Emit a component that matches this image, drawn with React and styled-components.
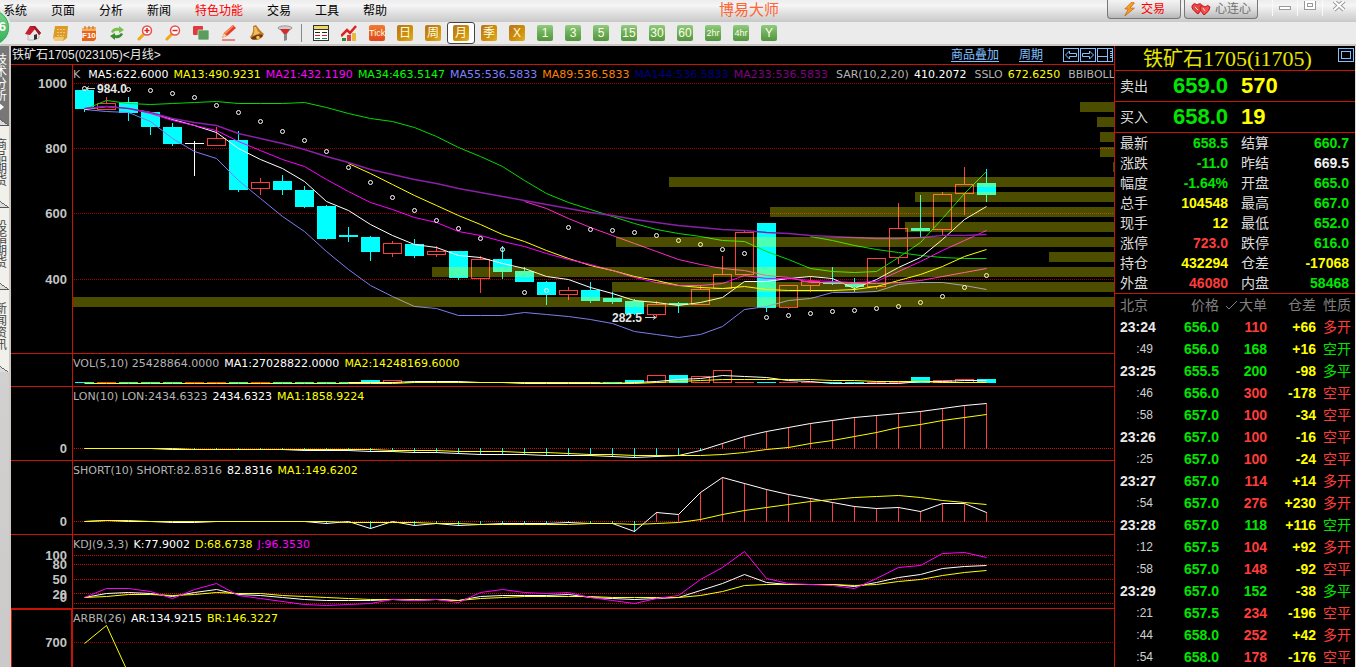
import React from "react"
import styled, { createGlobalStyle, css } from "styled-components"

const cjk = `"Liberation Sans", "Noto Sans CJK SC", sans-serif`
const RED = "#c81405"
const UP = "#ff3c3c"
const DOWN = "#00e600"
const CYAN = "#00ffff"
const YELLOW = "#ffff00"
const MAGENTA = "#ff00ff"
const WHITE = "#ffffff"
const GREY = "#b4b4b4"

const GlobalStyle = createGlobalStyle`
  * {
    box-sizing: border-box;
  }

  body {
    margin: 0;
    background: #000;
    font-family: ${cjk};
    font-size: 12px;
  }

  button {
    border: 0;
    padding: 0;
    background: none;
    font-family: inherit;
    color: inherit;
    cursor: pointer;
  }

  table {
    border-collapse: collapse;
    table-layout: fixed;
    width: 100%;
  }

  th, td {
    padding: 0;
    font-weight: normal;
    white-space: nowrap;
  }
`

const Page = styled.div`
  display: flex;
  flex-direction: column;
  height: 100vh;
  overflow: hidden;
  position: relative;
`

/* ---------- top bars ---------- */

const MenuBar = styled.header`
  display: flex;
  flex: none;
  height: 22px;
  background: linear-gradient(#ededed 0, #f5f5f5 25%, #e0e0e0 60%, #c9c9c9 100%);
`

const Menu = styled.nav`
  display: flex;
  gap: 24px;
  padding-left: 3px;
`

const MenuItem = styled.button`
  font-size: 12px;
  line-height: 20px;
  white-space: nowrap;
  color: ${(props) => (props.$hot ? "#ff0000" : "#000")};
`

const Brand = styled.div`
  flex: 1;
  padding-left: 4px;
  text-align: center;
  font-size: 15px;
  line-height: 20px;
  color: #ff6432;
`

const PillGroup = styled.div`
  display: flex;
  gap: 3px;
  margin-right: 14px;
`

const Pill = styled.button`
  display: flex;
  align-items: center;
  justify-content: center;
  gap: 4px;
  width: 74px;
  height: 19px;
  border: 1px solid #777;
  border-top: 0;
  border-radius: 0 0 4px 4px;
  background: linear-gradient(#f4f4f4, #dcdcdc 55%, #b8b8b8);
  font-size: 12px;
  line-height: 16px;
  color: ${(props) => (props.$hot ? "#ff0000" : "#707070")};
`

const WindowButton = styled.button`
  width: ${(props) => (props.$wide ? 34 : 25)}px;
  height: 16px;
  border-left: 1px solid #fafafa;

  svg {
    display: block;
    margin: 0 auto;
  }
`

const ToolBar = styled.div`
  display: flex;
  flex: none;
  height: 24px;
  padding-left: 19px;
  border-bottom: 2px solid #cec6c1;
  background: #ebebeb;
`

const ToolButton = styled.button`
  display: flex;
  align-items: center;
  justify-content: center;
  flex: none;
  width: 28px;
  height: 22px;
  ${(props) =>
    props.$active &&
    css`
      border: 1px solid #444;
      border-radius: 3px;
      background: #fff;
    `}
`

const Divider = styled.span`
  flex: none;
  width: 1px;
  height: 18px;
  margin: 2px 5px 0 2px;
  background: #888;
`

const tones = {
  gold: "linear-gradient(135deg, #b8741c, #d09008 60%, #dcae30)",
  green: "linear-gradient(#92cb80, #6cae5a 50%, #55953f)",
  tick: "linear-gradient(#f07c30, #e0481c)",
}

const Tile = styled.span`
  width: 16px;
  height: 16px;
  border-radius: 2px;
  background: ${(props) => tones[props.$tone]};
  color: #fffde0;
  font-size: ${(props) => (props.$small ? 9 : 12)}px;
  line-height: 16px;
  text-align: center;
  white-space: nowrap;
`

const Bubble = styled.div`
  position: absolute;
  left: -28px;
  top: 8px;
  width: 39px;
  height: 39px;
  border: 2px solid #d8efe0;
  border-radius: 50%;
  outline: 1px solid #5d9c74;
  outline-offset: -3px;
  background: linear-gradient(#7ad68c, #2fae55);
  color: #fff;
  font-size: 13px;
  font-weight: bold;
  line-height: 34px;
  text-align: right;
  padding-right: 3px;
`

/* ---------- body ---------- */

const Body = styled.div`
  display: flex;
  flex: 1;
  min-height: 0;
`

const SideBar = styled.nav`
  display: flex;
  flex: none;
  flex-direction: column;
  align-items: flex-end;
  width: 11px;
  overflow: hidden;
  border-right: 2px solid #cec6c1;
  background: linear-gradient(#d8d8d8, #cacaca);
`

const SideTab = styled.button`
  display: flex;
  flex-direction: column;
  align-items: center;
  flex: none;
  width: 16px;
  height: ${(props) => (props.$active ? 80 : 82)}px;
  padding-top: ${(props) => (props.$active ? 8 : 13)}px;
  background:
    linear-gradient(34deg, #dcdcdc 8px, #666 8px, #666 9px, transparent 9px),
    ${(props) => (props.$active ? "#777" : "#f1f0ea")};
  border-bottom: ${(props) => (props.$end ? 0 : 1)}px solid #555;
  color: ${(props) => (props.$active ? "#fff" : "#444")};
  font-size: 12px;
  line-height: 12px;

  span {
    display: block;
    width: 12px;
  }
`

const ChartArea = styled.main`
  display: flex;
  flex: 1;
  flex-direction: column;
  min-width: 0;
  background: #000;
`

const ChartHeader = styled.div`
  display: flex;
  flex: none;
  height: 19px;
  border-bottom: 1px solid ${RED};
  color: #e8e8e8;
  font-size: 12px;
  line-height: 18px;
`

const ChartTitle = styled.h1`
  flex: 1;
  margin: 0;
  padding-left: 1px;
  font-size: 12px;
  font-weight: normal;
`

const HeaderLink = styled.a`
  margin-right: 20px;
  color: #80c0ff;
  text-decoration: underline;
  text-underline-offset: 2px;
`

const IconButton = styled.button`
  width: 17px;
  height: 15px;
  margin-top: 1px;

  svg {
    display: block;
  }
`

const Pane = styled.section`
  display: flex;
  flex: ${(props) => (props.$last ? "1" : "none")};
  min-height: 0;
  overflow: hidden;
  border-bottom: ${(props) => (props.$last ? "0" : `1px solid ${RED}`)};
`

const Axis = styled.div`
  flex: none;
  width: 62px;
  border: solid ${RED};
  border-width: ${(props) => (props.$focus ? "1px 2px 0 1px" : "0 1px 0 0")};

  svg {
    display: block;
  }

  text {
    fill: #c4c4c4;
    font: bold 13px "Liberation Sans", sans-serif;
    text-anchor: end;
  }
`

const Plot = styled.div`
  flex: 1;
  min-width: 0;
`

const Legend = styled.div`
  display: flex;
  gap: 5px;
  height: 16px;
  overflow: visible;
  font-family: "DejaVu Sans", sans-serif;
  font-size: 11px;
  line-height: 20px;
  white-space: nowrap;
`

const LegendItem = styled.span`
  color: ${(props) => props.$color};
  padding-left: ${(props) => (props.$lead ? 3 : 0)}px;
`

const Canvas = styled.svg`
  display: block;
  width: 100%;

  text {
    fill: #e6e6e6;
    font: bold 12px "Liberation Sans", sans-serif;
  }
`

/* ---------- quote panel ---------- */

const QuotePanel = styled.aside`
  flex: none;
  width: 242px;
  overflow: hidden;
  border-left: 1px solid ${RED};
  border-right: 1px solid #ddd;
  background: #000;
  color: #dcdcdc;
`

const QuoteHeader = styled.div`
  display: flex;
  height: 25px;
  padding-left: 28px;
  border-bottom: 1px solid ${RED};
`

const QuoteTitle = styled.h2`
  flex: 1;
  margin: 0;
  color: #e6e600;
  font-family: "Noto Sans CJK SC", sans-serif;
  font-size: 20px;
  font-weight: normal;
  line-height: 24px;
  white-space: nowrap;

  span {
    font-family: "Liberation Serif", serif;
    font-size: 22px;
  }
`

const BigRow = styled.div`
  display: grid;
  grid-template-columns: 28px 80px 1fr;
  column-gap: 0;
  height: 31px;
  padding-left: 5px;
  border-bottom: 1px solid ${RED};
  font-size: 14px;
  line-height: 30px;
`

const BigNumber = styled.span`
  color: ${(props) => props.$color};
  font-size: 22px;
  font-weight: bold;
  text-align: ${(props) => (props.$right ? "right" : "left")};
  padding-left: ${(props) => (props.$right ? 0 : 13)}px;
`

const QuoteTable = styled.table`
  border-bottom: 1px solid ${RED};
  font-size: 14px;
  line-height: 20px;

  tr {
    height: 20px;
  }

  th {
    padding-left: 5px;
    text-align: left;
  }

  td + th {
    padding-left: 13px;
  }

  td:last-child {
    padding-right: 6px;
  }
`

const Value = styled.td`
  color: ${(props) => props.$color};
  font-weight: bold;
  text-align: right;
`

const TickTable = styled.table`
  font-size: 14px;
  line-height: 22px;

  tr {
    height: 22px;
  }

  thead {
    color: #808080;
  }

  th {
    text-align: right;
  }

  th:first-child {
    padding-left: 5px;
    text-align: left;
  }
`

const Minute = styled.td`
  padding-left: 5px;
  color: #e8e8e8;
  font-weight: bold;
`

const Second = styled.td`
  padding-right: 4px;
  color: #d0d0d0;
  font-size: 12px;
  text-align: right;
`

const Nature = styled.td`
  color: ${(props) => props.$color};
  text-align: right;
  padding-right: 4px;
`

const LastHead = styled.th`
  padding-right: 4px;
`

/* ---------- data ---------- */

const menus = ["系统", "页面", "分析", "新闻", "特色功能", "交易", "工具", "帮助"]

const sideTabs = ["技术分析", "商品期货", "股指期货", "新闻资讯"]

const periods = [
  ["Tick", "tick"],
  ["日", "gold"],
  ["周", "gold"],
  ["月", "gold"],
  ["季", "gold"],
  ["X", "gold"],
  ["1", "green"],
  ["3", "green"],
  ["5", "green"],
  ["15", "green"],
  ["30", "green"],
  ["60", "green"],
  ["2hr", "green"],
  ["4hr", "green"],
  ["Y", "green"],
]

// type, body top, body bottom, high, low
const candles = [
  ["d", 90, 109, 89, 112],
  ["u", 103, 110, 97, 110],
  ["d", 102, 113, 97, 121],
  ["d", 112, 127, 112, 135],
  ["d", 127, 144, 123, 146],
  ["x", 143, 144, 141, 176],
  ["u", 138, 146, 127, 146],
  ["d", 140, 190, 131, 192],
  ["u", 182, 189, 178, 195],
  ["d", 181, 190, 175, 195],
  ["d", 190, 207, 186, 208],
  ["d", 206, 239, 205, 240],
  ["d", 235, 237, 227, 242],
  ["d", 237, 252, 236, 261],
  ["u", 243, 254, 241, 257],
  ["d", 244, 256, 239, 258],
  ["u", 251, 255, 246, 257],
  ["d", 251, 278, 251, 280],
  ["u", 259, 279, 256, 293],
  ["d", 259, 272, 246, 279],
  ["d", 271, 282, 267, 282],
  ["d", 282, 295, 281, 305],
  ["u", 290, 295, 287, 300],
  ["d", 290, 301, 282, 303],
  ["d", 298, 302, 292, 304],
  ["d", 301, 314, 299, 315],
  ["u", 304, 315, 301, 318],
  ["d", 303, 305, 302, 313],
  ["u", 289, 305, 285, 305],
  ["u", 274, 289, 256, 289],
  ["u", 232, 275, 230, 275],
  ["d", 223, 308, 223, 312],
  ["u", 285, 308, 285, 309],
  ["u", 281, 286, 276, 292],
  ["d", 282, 284, 267, 285],
  ["d", 284, 287, 278, 292],
  ["u", 258, 287, 258, 289],
  ["u", 228, 258, 203, 264],
  ["d", 228, 231, 195, 237],
  ["u", 194, 230, 192, 236],
  ["u", 184, 194, 167, 215],
  ["d", 183, 195, 169, 202],
]

const sar = [
  88, null, 89, 90, 93, 97, 105, 112, 121, 131, 140, 151, 167, 182, 197, 210,
  220, 228, 238, 249, 292, 290, 227, 229, 230, 232, 235, 240, 244, 249, 253,
  317, 315, 313, 311, 310, 308, 306, 302, 296, 287, 275,
]

const mainLines = [
  {
    color: "#00dc00",
    ys: [
      109, 100, 103, 104, 103, 102, 101, 103, 103, 103, 102, 107, 113, 118, 121,
      127, 136, 147, 156, 166, 180, 193, 202, 209, 216, 223, 229, 233, 236, 240,
      241, 251, 259, 268, 271, 272, 271, 257, 242, 218, 193, 171,
    ],
  },
  {
    color: "#00dc00",
    from: 33,
    ys: [236, 240, 245, 249, 252, 255, 257, 258, 258],
  },
  {
    color: "#7d7df0",
    ys: [
      109, 111, 112, 121, 138, 151, 158, 180, 198, 216, 231, 251, 269, 285, 296,
      306, 308, 315, 315, 315, 312, 314, 316, 319, 323, 331, 334, 337, 334, 326,
      309, 306, 300, 298, 292, 292, 291, 284, 282, 282, 285, 289,
    ],
  },
  {
    color: "#ffffff",
    ys: [
      109, 106, 108, 112, 119, 125, 132, 148, 159, 168, 181, 201, 210, 224, 235,
      244, 247, 255, 257, 263, 268, 276, 279, 287, 293, 300, 302, 305, 302, 297,
      281, 281, 278, 276, 278, 288, 279, 267, 257, 239, 219, 206,
    ],
  },
  {
    color: "#ffff00",
    from: 12,
    ys: [
      163, 173, 184, 195, 205, 215, 224, 234, 241, 250, 258, 265, 270, 276, 280,
      285, 287, 288, 286, 289, 290, 290, 290, 289, 286, 280, 274, 266, 256, 249,
    ],
  },
  {
    color: "#ff00ff",
    ys: [
      108, 106, 108, 113, 120, 125, 130, 141, 150, 159, 166, 179, 191, 202, 209,
      217, 222, 231, 235, 241, 246, 253, 259, 264, 270, 277, 282, 285, 285, 283,
      275, 278, 278, 280, 281, 282, 281, 271, 261, 250, 240, 230,
    ],
  },
  {
    color: "#ff28c8",
    from: 20,
    ys: [
      201, 208, 218, 227, 235, 243, 251, 259, 264, 268, 270, 275, 277, 282, 282,
      283, 283, 282, 280, 276, 272, 268,
    ],
  },
  {
    color: "#8a1fa8",
    wide: true,
    ys: [
      108, 106, 108, 112, 118, 122, 125, 133, 138, 143, 149, 156, 162, 169, 174,
      179, 183, 188, 192, 196, 200, 204, 208, 212, 215, 219, 222, 225, 227, 229,
      230, 232, 233, 235, 236, 237, 238, 238, 237, 235, 235, 234,
    ],
  },
]

// price distribution, widths measured from the right edge
const bands = [34, 17, 14, 14, 1, 445, 199, 344, 209, 498, 65, 682, 502, 1041]

const volumes = [
  382, 382, 382, 382, 382, 382, 382, 382, 382, 382, 382, 382, 382, 380, 380,
  382, 382, 382, 382, 382, 382, 382, 382, 382, 382, 380, 375, 375, 376, 370,
  382, 382, 382, 382, 382, 382, 382, 382, 377, 380, 379, 379,
]

const volLines = [
  {
    color: WHITE,
    from: 12,
    ys: [
      382, 382, 382, 381, 381, 381, 382, 382, 383, 383, 383, 383, 383, 382, 381,
      379, 378, 375, 376, 377, 380, 381, 383, 383, 383, 383, 381, 381, 380, 380,
    ],
  },
  {
    color: YELLOW,
    ys: [
      383, 383, 383, 383, 383, 383, 383, 383, 383, 383, 383, 383, 383, 383, 383,
      382, 382, 382, 382, 382, 382, 382, 382, 382, 383, 383, 382, 381, 380, 379,
      379, 379, 379, 379, 380, 380, 381, 381, 381, 382, 382, 382,
    ],
  },
]

const lon = [
  448, 448, 448, 448, 449, 449, 449, 449, 449, 449, 450, 450, 450, 451, 451,
  452, 452, 453, 454, 454, 454, 455, 455, 455, 456, 457, 456, 455, 450, 443,
  436, 431, 427, 423, 420, 417, 415, 413, 411, 408, 405, 403,
]

const lonMa = [
  448, 448, 448, 448, 448, 449, 449, 449, 449, 449, 449, 449, 449, 449, 450,
  450, 450, 451, 451, 451, 452, 452, 453, 454, 454, 455, 455, 455, 455, 454,
  452, 449, 447, 443, 440, 436, 432, 427, 424, 420, 417, 414,
]

const short = [
  521, 520, 521, 521, 522, 522, 521, 521, 521, 521, 521, 523, 521, 528, 521,
  525, 523, 525, 524, 523, 523, 523, 522, 523, 523, 531, 512, 514, 492, 477,
  483, 489, 494, 498, 502, 506, 508, 507, 511, 503, 503, 512,
]

const shortMa = [
  521, 520, 520, 521, 521, 521, 521, 521, 521, 521, 521, 521, 522, 522, 522,
  522, 523, 523, 524, 524, 524, 524, 524, 523, 523, 524, 523, 522, 519, 514,
  510, 507, 504, 501, 499, 497, 496, 495, 497, 500, 502, 504,
]

const kdjLines = [
  {
    color: WHITE,
    ys: [
      597, 593, 592, 593, 596, 592, 589, 594, 595, 597, 599, 600, 600, 600, 599,
      600, 599, 600, 596, 595, 595, 595, 594, 597, 598, 599, 598, 597, 590, 583,
      574, 582, 584, 584, 584, 586, 582, 577, 574, 568, 566, 565,
    ],
  },
  {
    color: YELLOW,
    ys: [
      597, 596, 594, 594, 595, 594, 592, 593, 593, 595, 596, 597, 598, 599, 599,
      599, 599, 600, 598, 597, 596, 596, 596, 596, 597, 597, 597, 597, 595, 591,
      585, 584, 584, 584, 584, 585, 584, 581, 579, 575, 572, 570,
    ],
  },
  {
    color: MAGENTA,
    ys: [
      597, 588, 588, 591, 598, 589, 583, 595, 598, 601, 604, 605, 604, 603, 599,
      600, 599, 602, 592, 589, 592, 593, 592, 597, 600, 603, 598, 595, 579, 567,
      551, 578, 583, 584, 585, 588, 578, 567, 565, 553, 552, 557,
    ],
  },
]

const quotes = [
  ["最新", "658.5", DOWN, "结算", "660.7", DOWN],
  ["涨跌", "-11.0", DOWN, "昨结", "669.5", "#f0f0f0"],
  ["幅度", "-1.64%", DOWN, "开盘", "665.0", DOWN],
  ["总手", "104548", YELLOW, "最高", "667.0", DOWN],
  ["现手", "12", YELLOW, "最低", "652.0", DOWN],
  ["涨停", "723.0", UP, "跌停", "616.0", DOWN],
  ["持仓", "432294", YELLOW, "仓差", "-17068", YELLOW],
  ["外盘", "46080", UP, "内盘", "58468", DOWN],
]

const ticks = [
  ["23:24", "656.0", "110", "+66", "多开", UP],
  [":49", "656.0", "168", "+16", "空开", DOWN],
  ["23:25", "655.5", "200", "-98", "多平", DOWN],
  [":46", "656.0", "300", "-178", "空平", UP],
  [":58", "657.0", "100", "-34", "空平", UP],
  ["23:26", "657.0", "100", "-16", "空平", UP],
  [":25", "657.0", "100", "-24", "空平", UP],
  ["23:27", "657.0", "114", "+14", "多开", UP],
  [":54", "657.0", "276", "+230", "多开", UP],
  ["23:28", "657.0", "118", "+116", "空开", DOWN],
  [":12", "657.5", "104", "+92", "多开", UP],
  [":58", "657.0", "148", "-92", "空平", UP],
  ["23:29", "657.0", "152", "-38", "多平", DOWN],
  [":21", "657.5", "234", "-196", "空平", UP],
  [":44", "658.0", "252", "+42", "多开", UP],
  [":54", "658.0", "178", "-176", "空平", UP],
]

/* ---------- chart pieces ---------- */

const STEP = 22
const xAt = (i) => 11 + i * STEP

const Line = ({ color, ys, from = 0, wide }) => (
  <polyline
    fill="none"
    stroke={color}
    strokeWidth={wide ? 1.5 : 1}
    points={ys.map((y, i) => `${xAt(i + from) + 0.5},${y + 0.5}`).join(" ")}
  />
)

const GridLine = ({ y, color = "#a00000" }) => (
  <line
    x1="1"
    x2="100%"
    y1={y + 0.5}
    y2={y + 0.5}
    stroke={color}
    strokeDasharray="1 1"
    shapeRendering="crispEdges"
  />
)

const Bar = ({ i, up, top, bottom }) =>
  up && bottom - top > 1 ? (
    <rect
      x={xAt(i) - 8.5}
      y={top + 0.5}
      width="18"
      height={bottom - top - 1}
      fill="#000"
      stroke={UP}
    />
  ) : (
    <rect
      x={xAt(i) - 9}
      y={top}
      width="19"
      height={bottom - top}
      fill={up ? UP : CYAN}
    />
  )

const Candle = ({ i, candle }) => {
  const [type, top, bottom, high, low] = candle
  const color = { u: UP, d: CYAN, x: WHITE }[type]
  return (
    <g>
      <rect x={xAt(i)} y={high} width="1" height={low - high} fill={color} />
      {type === "x" ? (
        <rect x={xAt(i) - 9} y={top} width="19" height="1" fill={color} />
      ) : (
        <Bar i={i} up={type === "u"} top={top} bottom={bottom} />
      )}
    </g>
  )
}

const Stems = ({ ys, zero, from = 0 }) =>
  ys.map((y, i) =>
    i < from || y === zero ? null : (
      <rect
        key={i}
        x={xAt(i)}
        y={Math.min(y, zero)}
        width="1"
        height={Math.abs(y - zero) + 1}
        fill={y < zero ? UP : CYAN}
      />
    )
  )

// All series share one vertical scale; `top` is where a pane starts on it.
const ChartPane = ({ top, height, labels = [], legend, last, children }) => (
  <Pane $last={last}>
    <Axis $focus={last}>
      <svg width="59" height={height} aria-hidden="true">
        {labels.map(([text, y]) => (
          <text key={text} x={last ? 55 : 56} y={y - top + (last ? 4 : 5)}>
            {text}
          </text>
        ))}
      </svg>
    </Axis>
    <Plot>
      <Legend>
        {legend.map(([text, color, lead]) => (
          <LegendItem key={text} $color={color} $lead={lead}>
            {text}
          </LegendItem>
        ))}
      </Legend>
      <Canvas height={height - 16}>
        <g transform={`translate(0 ${-top - 16})`}>{children}</g>
      </Canvas>
    </Plot>
  </Pane>
)

/* ---------- toolbar drawings ---------- */

const Glyph = ({ children, size = 16 }) => (
  <svg width={size} height={size} viewBox="0 0 16 16" aria-hidden="true">
    {children}
  </svg>
)

const tools = [
  [
    "首页",
    <Glyph>
      <path d="M3 8v7h5l6-2V7L9 4z" fill="#e8e8e8" stroke="#999" strokeWidth=".6" />
      <path d="M0 9l5-8h5l6 7-2 2-4-6-5 6z" fill="#c42030" />
      <path d="M5 1h5l6 7-2 2-5-7z" fill="#a01828" />
      <path d="M9 15v-5l3-1v5z" fill="#303030" />
    </Glyph>,
  ],
  [
    "记事",
    <Glyph>
      <path d="M2 1h13l-1 12-4 3H2L0 13z" fill="#dc9a28" />
      <path d="M0 13l2-1h9l-1 4H2z" fill="#f0c878" />
      <path d="M4 4.500h8M4 7.500h8M4 10.500h7" stroke="#f0c878" strokeDasharray="2 1" />
    </Glyph>,
  ],
  [
    "资料",
    <Glyph>
      <path d="M1 3l14-1v12l-2 2H1z" fill="#e8641c" />
      <path d="M1 3l14-1v4H1z" fill="#f4b060" />
      <path d="M4 1v3M8 1v3M12 1v3" stroke="#b06820" />
      <text x="1" y="13" fontSize="8" fontWeight="bold" fill="#fff">
        F10
      </text>
    </Glyph>,
  ],
  [
    "刷新",
    <Glyph>
      <path d="M2 7q2-5 8-4V1l5 4-5 3V6Q6 5 4 8z" fill="#7cc050" />
      <path d="M14 9q-2 5-8 4v2l-5-4 5-3v2q4 1 6-2z" fill="#3c8c30" />
    </Glyph>,
  ],
  [
    "放大",
    <Glyph>
      <path d="M2 14l5-5" stroke="#f0a818" strokeWidth="3" strokeLinecap="round" />
      <circle cx="10" cy="5.500" r="4.500" fill="#fff" stroke="#e85048" strokeWidth="1.500" />
      <path d="M7.500 5.500h5M10 3v5" stroke="#e02020" strokeWidth="1.500" />
    </Glyph>,
  ],
  [
    "缩小",
    <Glyph>
      <path d="M2 14l5-5" stroke="#f0a818" strokeWidth="3" strokeLinecap="round" />
      <circle cx="10" cy="5.500" r="4.500" fill="#fff" stroke="#e85048" strokeWidth="1.500" />
      <path d="M7.500 5.500h5" stroke="#e02020" strokeWidth="1.500" />
    </Glyph>,
  ],
  [
    "叠加",
    <Glyph>
      <rect x="0" y="1" width="10" height="9" rx="1" fill="#dc3c3c" />
      <rect x="5" y="5" width="11" height="10" rx="1" fill="#5c9c5c" stroke="#e0f0e0" strokeWidth=".7" />
    </Glyph>,
  ],
  [
    "画线",
    <Glyph>
      <path d="M1 13l2-5 9-8 3 3-9 8z" fill="#e83c28" />
      <path d="M1 13l2-5 3 3z" fill="#f4d088" />
      <path d="M3 8l9-8 1 1-8 8z" fill="#f88858" />
      <path d="M1 15h13" stroke="#e86060" strokeWidth="1.500" />
    </Glyph>,
  ],
  [
    "预警",
    <Glyph>
      <path d="M1 12Q5 8 4 1l3-1q4 6 8 9-3 6-8 6-5 0-6-3z" fill="#c47c24" />
      <path d="M5 2l2 0q1 4 4 6l-7 3q2-4 1-9z" fill="#f0bc60" />
      <ellipse cx="8" cy="12" rx="6" ry="2" fill="#70380c" transform="rotate(-14 8 12)" />
      <circle cx="9" cy="12.500" r="1.800" fill="#f0c060" />
    </Glyph>,
  ],
  [
    "筛选",
    <Glyph>
      <path d="M1 2h14l-5 7v6l-3 1V9z" fill="#888" />
      <ellipse cx="8" cy="3" rx="7" ry="2.200" fill="#ccc" stroke="#777" strokeWidth=".6" />
      <path d="M3 4h10l-4 5H7z" fill="#dc2828" />
    </Glyph>,
  ],
]

const views = [
  [
    "报价",
    <Glyph>
      <rect x=".5" y=".5" width="15" height="15" fill="#fff" stroke="#333" />
      <path d="M1 2.500h14" stroke="#f0d860" strokeWidth="3" />
      <path d="M1 4.500h14" stroke="#333" />
      <path d="M2 7.500h5M9 7.500h5" stroke="#222" />
      <path d="M2 10.500h5M9 10.500h5" stroke="#d02020" />
      <path d="M2 13.500h5M9 13.500h5" stroke="#208040" />
    </Glyph>,
  ],
  [
    "走势",
    <Glyph>
      <path d="M1 16v-3h4v3z" fill="#2c8c30" />
      <path d="M6 16v-6h4v6z" fill="#e04030" />
      <path d="M11 16V8h4v8z" fill="#e8b840" />
      <path d="M0 11l6-6 3 3 6-7" fill="none" stroke="#e02020" strokeWidth="2.500" />
    </Glyph>,
  ],
]

const BoxIcon = ({ children }) => (
  <svg width="16" height="14" viewBox="0 0 16 14" fill="none" stroke="#80c0ff">
    <rect x=".5" y=".5" width="15" height="13" />
    {children}
  </svg>
)

/* ---------- page ---------- */

const TopBars = () => (
  <>
    <MenuBar>
      <Menu>
        {menus.map((name) => (
          <MenuItem key={name} $hot={name === "特色功能"}>
            {name}
          </MenuItem>
        ))}
      </Menu>
      <Brand>博易大师</Brand>
      <PillGroup>
        <Pill $hot>
          <Glyph size={14}>
            <path d="M10 0L2 8h4l-4 8 11-9H8l5-6z" fill="#f8a020" stroke="#c05c10" strokeWidth=".8" />
          </Glyph>
          交易
        </Pill>
        <Pill>
          <svg width="20" height="14" viewBox="0 0 20 14" aria-hidden="true">
            <path
              d="M7 12Q0 7 1 4q2-4 5-1 4-3 5 1 0 4-4 8z"
              fill="#e84848"
              stroke="#c01818"
            />
            <path
              d="M13 13Q8 8 9 5q2-3 5 0 3-3 5 0 0 4-6 8z"
              fill="#f05050"
              stroke="#c01818"
            />
            <path d="M4 5l3 3M12 6l2 3" stroke="#ffd0d0" />
          </svg>
          心连心
        </Pill>
      </PillGroup>
      <WindowButton aria-label="最小化">
        <svg width="13" height="14" fill="#fff" stroke="#999">
          <rect x=".5" y="5.500" width="11" height="3" />
        </svg>
      </WindowButton>
      <WindowButton aria-label="还原">
        <svg width="13" height="14" fill="#fff" stroke="#999">
          <rect x=".5" y="-1.500" width="11" height="10" />
          <rect x="3.500" y="2.500" width="5" height="3" />
        </svg>
      </WindowButton>
      <WindowButton $wide aria-label="关闭">
        <svg width="13" height="14">
          <path d="M1 0l10 9M11 0L1 9" stroke="#999" strokeWidth="4" />
          <path d="M1 0l10 9M11 0L1 9" stroke="#fff" strokeWidth="2" />
        </svg>
      </WindowButton>
    </MenuBar>
    <ToolBar>
      {tools.map(([name, icon]) => (
        <ToolButton key={name} aria-label={name}>
          {icon}
        </ToolButton>
      ))}
      <Divider />
      {views.map(([name, icon]) => (
        <ToolButton key={name} aria-label={name}>
          {icon}
        </ToolButton>
      ))}
      {periods.map(([name, tone]) => (
        <ToolButton key={name} $active={name === "月"}>
          <Tile $tone={tone} $small={name.length > 2}>
            {name}
          </Tile>
        </ToolButton>
      ))}
    </ToolBar>
  </>
)

const Tabs = () => (
  <SideBar>
    {sideTabs.map((name, i) => (
      <SideTab key={name} $active={i === 0} $end={i === sideTabs.length - 1}>
        <span>{name}</span>
        {i === 0 && (
          <svg width="12" height="10" aria-hidden="true">
            <path d="M4 1l5 4-5 4z" fill="#fff" />
          </svg>
        )}
      </SideTab>
    ))}
  </SideBar>
)

const Charts = () => (
  <ChartArea>
    <ChartHeader>
      <ChartTitle>铁矿石1705(023105)&lt;月线&gt;</ChartTitle>
      <HeaderLink href="#overlay">商品叠加</HeaderLink>
      <HeaderLink href="#period">周期</HeaderLink>
      <IconButton aria-label="后退">
        <BoxIcon>
          <path d="M2.500 7l4-4v2.500h7v3h-7V11z" />
        </BoxIcon>
      </IconButton>
      <IconButton aria-label="前进">
        <BoxIcon>
          <path d="M13.500 7l-4-4v2.500h-7v3h7V11z" />
        </BoxIcon>
      </IconButton>
      <IconButton aria-label="布局">
        <BoxIcon>
          <path d="M1 8.500h10M10.500 1v12M13 3.500h2M13 5.500h2M13 7.500h2M13 9.500h2" />
        </BoxIcon>
      </IconButton>
    </ChartHeader>

    <ChartPane
      top={65}
      height={288}
      labels={[
        ["1000", 83],
        ["800", 148],
        ["600", 213],
        ["400", 279],
      ]}
      legend={[
        ["K", GREY],
        ["MA5:622.6000", WHITE, true],
        ["MA13:490.9231", YELLOW],
        ["MA21:432.1190", MAGENTA],
        ["MA34:463.5147", "#00ff00"],
        ["MA55:536.5833", "#8080ff"],
        ["MA89:536.5833", "#ff8000"],
        ["MA144:536.5833", "#000080"],
        ["MA233:536.5833", "#800080"],
        ["SAR(10,2,20)", GREY, true],
        ["410.2072", WHITE],
        ["SSLO", GREY, true],
        ["672.6250", YELLOW],
        ["BBIBOLL", GREY, true],
      ]}
    >
      <GridLine y={83} />
      <GridLine y={148} />
      <GridLine y={213} />
      <GridLine y={279} />
      {candles.map((candle, i) => (
        <Candle key={i} i={i} candle={candle} />
      ))}
      {mainLines.map((line, i) => (
        <Line key={i} {...line} />
      ))}
      {sar.map((y, i) =>
        y === null ? null : (
          <circle
            key={i}
            cx={xAt(i) + 0.5}
            cy={y + 0.5}
            r="2"
            fill="none"
            stroke="#fff"
          />
        )
      )}
      <svg x="100%" overflow="visible">
        {bands.map((width, i) => (
          <rect
            key={i}
            x={-width}
            y={102 + i * 15}
            width={width}
            height="10"
            fill="#ffff00"
            opacity="0.3"
          />
        ))}
      </svg>
      <text x="24" y="93">
        984.0
      </text>
      <path d="M13 88.500h9M13 88.500l3-2M13 88.500l3 2" stroke="#ccc" />
      <text x="539" y="322">
        282.5
      </text>
      <path d="M572 317.500h11M583 317.500l-3-2M583 317.500l-3 2" stroke="#ccc" />
    </ChartPane>

    <ChartPane
      top={354}
      height={32}
      legend={[
        ["VOL(5,10) 25428864.0000", GREY],
        ["MA1:27028822.0000", WHITE],
        ["MA2:14248169.6000", YELLOW],
      ]}
    >
      {volumes.map((y, i) => (
        <Bar key={i} i={i} up={candles[i][0] !== "d"} top={y} bottom={383} />
      ))}
      {volLines.map((line) => (
        <Line key={line.color} {...line} />
      ))}
    </ChartPane>

    <ChartPane
      top={387}
      height={73}
      labels={[["0", 448]]}
      legend={[
        ["LON(10) LON:2434.6323", GREY],
        ["2434.6323 ", WHITE],
        ["MA1:1858.9224", YELLOW],
      ]}
    >
      <GridLine y={448} color={RED} />
      <Stems ys={lon} zero={448} from={5} />
      <Line color={WHITE} ys={lon} />
      <Line color={YELLOW} ys={lonMa} />
    </ChartPane>

    <ChartPane
      top={461}
      height={73}
      labels={[["0", 521]]}
      legend={[
        ["SHORT(10) SHORT:82.8316", GREY],
        ["82.8316", WHITE],
        ["MA1:149.6202", YELLOW],
      ]}
    >
      <GridLine y={521} color={RED} />
      <Stems ys={short} zero={521} from={11} />
      <Line color={WHITE} ys={short} />
      <Line color={YELLOW} ys={shortMa} />
    </ChartPane>

    <ChartPane
      top={535}
      height={73}
      labels={[
        ["100", 555],
        ["80", 564],
        ["50", 579],
        ["20", 594],
        ["0", 597],
      ]}
      legend={[
        ["KDJ(9,3,3)", GREY],
        ["K:77.9002", WHITE],
        ["D:68.6738", YELLOW],
        ["J:96.3530", MAGENTA],
      ]}
    >
      {[555, 564, 579, 593, 603].map((y) => (
        <GridLine key={y} y={y} color={RED} />
      ))}
      {kdjLines.map((line) => (
        <Line key={line.color} {...line} />
      ))}
    </ChartPane>

    <ChartPane
      last
      top={609}
      height={73}
      labels={[["700", 642]]}
      legend={[
        ["ARBR(26)", GREY],
        ["AR:134.9215", WHITE],
        ["BR:146.3227", YELLOW],
      ]}
    >
      <GridLine y={642} />
      <Line color={YELLOW} ys={[643, 625, 673]} />
    </ChartPane>
  </ChartArea>
)

const Quotes = () => (
  <QuotePanel>
    <QuoteHeader>
      <QuoteTitle>
        铁矿石<span>1705(i1705)</span>
      </QuoteTitle>
      <IconButton aria-label="窗口">
        <BoxIcon>
          <rect x="3.500" y="3.500" width="9" height="7" />
        </BoxIcon>
      </IconButton>
    </QuoteHeader>
    <BigRow>
      卖出
      <BigNumber $color={DOWN} $right>
        659.0
      </BigNumber>
      <BigNumber $color={YELLOW}>570</BigNumber>
    </BigRow>
    <BigRow>
      买入
      <BigNumber $color={DOWN} $right>
        658.0
      </BigNumber>
      <BigNumber $color={YELLOW}>19</BigNumber>
    </BigRow>
    <QuoteTable>
      <colgroup>
        <col width="33" />
        <col width="80" />
        <col width="41" />
        <col width="86" />
      </colgroup>
      <tbody>
        {quotes.map(([name, value, color, name2, value2, color2]) => (
          <tr key={name}>
            <th scope="row">{name}</th>
            <Value $color={color}>{value}</Value>
            <th scope="row">{name2}</th>
            <Value $color={color2}>{value2}</Value>
          </tr>
        ))}
      </tbody>
    </QuoteTable>
    <TickTable>
      <colgroup>
        <col width="42" />
        <col width="62" />
        <col width="48" />
        <col width="49" />
        <col width="39" />
      </colgroup>
      <thead>
        <tr>
          <th>北京</th>
          <th>价格</th>
          <th>
            <svg width="14" height="10" fill="none" stroke="#808080" aria-hidden="true">
              <path d="M1 6l3 3 8-8" />
            </svg>
            大单
          </th>
          <th>仓差</th>
          <LastHead>性质</LastHead>
        </tr>
      </thead>
      <tbody>
        {ticks.map(([time, price, volume, diff, nature, color]) => (
          <tr key={time + price + volume}>
            {time[0] === ":" ? <Second>{time}</Second> : <Minute>{time}</Minute>}
            <Value $color={DOWN}>{price}</Value>
            <Value $color={color}>{volume}</Value>
            <Value $color={YELLOW}>{diff}</Value>
            <Nature $color={color}>{nature}</Nature>
          </tr>
        ))}
      </tbody>
    </TickTable>
  </QuotePanel>
)

const App = () => {
  return (
    <Page>
      <GlobalStyle />
      <TopBars />
      <Body>
        <Tabs />
        <Charts />
        <Quotes />
      </Body>
      <Bubble>6</Bubble>
    </Page>
  )
}

export default App
